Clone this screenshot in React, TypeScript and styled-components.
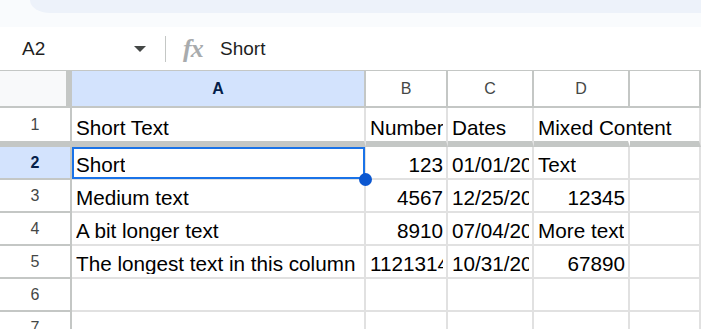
import React from 'react'
import styled, { createGlobalStyle } from 'styled-components'

const GlobalStyle = createGlobalStyle`
  html, body {
    margin: 0;
    padding: 0;
    background: #ffffff;
    overflow: hidden;
  }
  body {
    font-family: "Liberation Sans", Arial, sans-serif;
  }
  * {
    box-sizing: border-box;
  }
`

const Page = styled.div`
  width: 701px;
  height: 329px;
  overflow: hidden;
  background: #ffffff;
`

const TopStrip = styled.div`
  height: 27px;
  padding-left: 30px;
  background: #f9fbfd;
`

const ChromeCard = styled.div`
  height: 13px;
  background: #edf2fa;
  border-bottom-left-radius: 20px 13px;
`

const FormulaBar = styled.div`
  display: flex;
  align-items: center;
  height: 43px;
  background: #ffffff;
`

const NameBox = styled.div`
  display: flex;
  align-items: center;
  width: 165px;
  padding: 0 19px 0 22px;
  font-size: 19px;
  color: #1f1f1f;
`

const Caret = styled.span`
  margin-left: auto;
  width: 0;
  height: 0;
  border-left: 6px solid transparent;
  border-right: 6px solid transparent;
  border-top: 6px solid #444746;
`

const Divider = styled.div`
  width: 1px;
  height: 26px;
  background: #c4c7c5;
`

const FxIcon = styled.span`
  margin-left: 17px;
  width: 22px;
  font-family: "Liberation Serif", "DejaVu Serif", serif;
  font-style: italic;
  font-weight: bold;
  font-size: 26px;
  line-height: 1;
  color: #a8abad;
  letter-spacing: -1px;
`

const FormulaText = styled.span`
  margin-left: 15px;
  font-size: 19px;
  color: #1f1f1f;
`

const Sheet = styled.div`
  display: grid;
  grid-template-columns: 72px 294px 82px 86px 96px 1fr;
  border-top: 1px solid #c4c7c5;
`

const HeaderCell = styled.div<{ $active?: boolean; $corner?: boolean }>`
  display: flex;
  align-items: center;
  justify-content: center;
  height: 37px;
  border-right: ${p => (p.$corner ? '6px' : '2px')} solid #c4c7c5;
  border-bottom: 2px solid #c4c7c5;
  background: ${p => (p.$active ? '#d3e3fd' : p.$corner ? '#f8f9fa' : '#ffffff')};
  color: ${p => (p.$active ? '#041e49' : '#444746')};
  font-weight: ${p => (p.$active ? 'bold' : 'normal')};
  font-size: 16px;
`

const RowHeader = styled.div<{ $active?: boolean; $frozen?: boolean }>`
  display: flex;
  align-items: center;
  justify-content: center;
  height: ${p => (p.$frozen ? '39px' : '33px')};
  border-right: 2px solid #c4c7c5;
  border-bottom: ${p => (p.$frozen ? '6px' : '2px')} solid #c4c7c5;
  background: ${p => (p.$active ? '#d3e3fd' : '#ffffff')};
  color: ${p => (p.$active ? '#041e49' : '#444746')};
  font-weight: ${p => (p.$active ? 'bold' : 'normal')};
  font-size: 16px;
`

const DataCell = styled.div<{
  $align?: 'left' | 'right'
  $frozen?: boolean
  $spill?: boolean
  $selected?: boolean
}>`
  position: ${p => (p.$selected ? 'relative' : 'static')};
  display: flex;
  align-items: flex-end;
  justify-content: ${p => (p.$align === 'right' ? 'flex-end' : 'flex-start')};
  min-width: 0;
  height: ${p => (p.$frozen ? '39px' : '33px')};
  padding: 0 3px 3px 4px;
  border-right: 2px solid ${p => (p.$spill ? 'transparent' : '#e1e1e1')};
  border-bottom: ${p => (p.$frozen ? '6px solid #c4c7c5' : '2px solid #e1e1e1')};
  font-size: 20.7px;
  line-height: 21px;
  color: #000000;

  ${p =>
    p.$selected &&
    `
    &::after {
      content: '';
      position: absolute;
      left: 0;
      top: 0;
      right: -1px;
      bottom: -1px;
      border: 2px solid #1a73e8;
      z-index: 2;
    }
    &::before {
      content: '';
      position: absolute;
      right: -8px;
      bottom: -8px;
      width: 13px;
      height: 13px;
      border-radius: 50%;
      background: #0b57d0;
      z-index: 3;
    }
  `}
`

const CellText = styled.span<{ $spill?: boolean }>`
  display: block;
  min-width: 0;
  flex-shrink: ${p => (p.$spill ? 0 : 1)};
  overflow: ${p => (p.$spill ? 'visible' : 'hidden')};
  white-space: nowrap;
`

type Cell = { text: string; align?: 'left' | 'right'; spill?: boolean }

const columns = ['A', 'B', 'C', 'D', '']

const rows: Cell[][] = [
  [
    { text: 'Short Text' },
    { text: 'Numbers' },
    { text: 'Dates' },
    { text: 'Mixed Content', spill: true },
    { text: '' },
  ],
  [
    { text: 'Short' },
    { text: '123', align: 'right' },
    { text: '01/01/2023' },
    { text: 'Text' },
    { text: '' },
  ],
  [
    { text: 'Medium text' },
    { text: '4567', align: 'right' },
    { text: '12/25/2023' },
    { text: '12345', align: 'right' },
    { text: '' },
  ],
  [
    { text: 'A bit longer text' },
    { text: '8910', align: 'right' },
    { text: '07/04/2023' },
    { text: 'More text' },
    { text: '' },
  ],
  [
    { text: 'The longest text in this column' },
    { text: '11213141516' },
    { text: '10/31/2023' },
    { text: '67890', align: 'right' },
    { text: '' },
  ],
  [{ text: '' }, { text: '' }, { text: '' }, { text: '' }, { text: '' }],
  [{ text: '' }, { text: '' }, { text: '' }, { text: '' }, { text: '' }],
]

const selectedRow = 1
const selectedCol = 0

export default function App() {
  return (
    <Page>
      <GlobalStyle />
      <TopStrip>
        <ChromeCard />
      </TopStrip>

      <FormulaBar>
        <NameBox>
          A2
          <Caret />
        </NameBox>
        <Divider />
        <FxIcon>fx</FxIcon>
        <FormulaText>Short</FormulaText>
      </FormulaBar>

      <Sheet>
        <HeaderCell $corner />
        {columns.map((c, i) => (
          <HeaderCell key={i} $active={i === selectedCol}>
            {c}
          </HeaderCell>
        ))}

        {rows.map((row, r) => (
          <React.Fragment key={r}>
            <RowHeader $active={r === selectedRow} $frozen={r === 0}>
              {r + 1}
            </RowHeader>
            {row.map((cell, c) => (
              <DataCell
                key={c}
                $align={cell.align}
                $frozen={r === 0}
                $spill={cell.spill}
                $selected={r === selectedRow && c === selectedCol}
              >
                <CellText $spill={cell.spill}>{cell.text}</CellText>
              </DataCell>
            ))}
          </React.Fragment>
        ))}
      </Sheet>
    </Page>
  )
}
